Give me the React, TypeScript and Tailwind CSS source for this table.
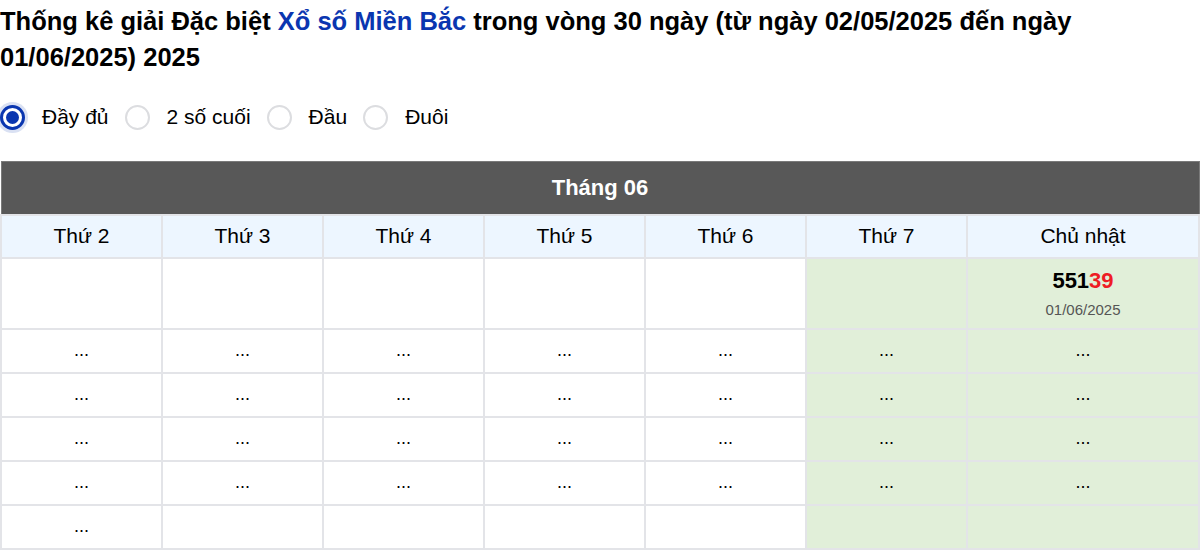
import { useState } from 'react';

const days = ['Thứ 2', 'Thứ 3', 'Thứ 4', 'Thứ 5', 'Thứ 6', 'Thứ 7', 'Chủ nhật'];
const options = ['Đầy đủ', '2 số cuối', 'Đầu', 'Đuôi'];

// rows after the first one: how many cells show "..."
const dotRows = [7, 7, 7, 7, 1];

export default function App() {
  const [mode, setMode] = useState(0);

  return (
    <div className="w-[1200px] bg-white text-black font-['Liberation_Sans',Arial,sans-serif]">
      <h2 className="pt-[3px] text-[25.5px] leading-[36px] font-bold">
        Thống kê giải Đặc biệt <a href="#" className="text-[#0a36b0]">Xổ số Miền Bắc</a> trong vòng 30 ngày (từ ngày 02/05/2025 đến ngày 01/06/2025) 2025
      </h2>

      <div className="mt-[30px] flex items-center h-6 text-[21px]">
        {options.map((o, i) => (
          <label key={o} className="flex items-center cursor-pointer mr-4" onClick={() => setMode(i)}>
            {mode === i ? (
              <span className="w-[25px] h-[25px] rounded-full border-[3px] border-[#0a36b0] bg-white flex items-center justify-center shadow-[0_0_0_3px_rgba(10,54,176,0.15)]">
                <span className="w-[13px] h-[13px] rounded-full bg-[#0a36b0]" />
              </span>
            ) : (
              <span className="w-[25px] h-[25px] rounded-full border-2 border-[#dcdde0] bg-white" />
            )}
            <span className="ml-[17px]">{o}</span>
          </label>
        ))}
      </div>

      <table className="mt-[32px] w-full table-fixed border-collapse text-center">
        <colgroup>
          {days.slice(0, 6).map(d => (
            <col key={d} className="w-[161px]" />
          ))}
          <col />
        </colgroup>
        <thead>
          <tr>
            <th colSpan={7} className="h-[53px] bg-[#585858] text-white text-[22px] font-bold border border-[#7a7a7a]">
              Tháng 06
            </th>
          </tr>
          <tr>
            {days.map(d => (
              <th key={d} className="h-[43px] bg-[#edf6ff] text-[21px] font-normal border-2 border-[#e3e4e8]">
                {d}
              </th>
            ))}
          </tr>
        </thead>
        <tbody className="text-[18px]">
          <tr>
            {days.map((d, i) => (
              <td key={d} className={`h-[71px] border-2 border-[#e3e4e8] align-top ${i >= 5 ? 'bg-[#e1efd9]' : ''}`}>
                {i === 6 && (
                  <div className="pt-[10px]">
                    <div className="text-[22px] font-bold leading-6">
                      551<span className="text-[#ee1c25]">39</span>
                    </div>
                    <div className="mt-[8px] text-[15px] text-[#555] leading-[18px]">01/06/2025</div>
                  </div>
                )}
              </td>
            ))}
          </tr>
          {dotRows.map((n, r) => (
            <tr key={r}>
              {days.map((d, i) => (
                <td key={d} className={`h-[44px] border-2 border-[#e3e4e8] ${i >= 5 ? 'bg-[#e1efd9]' : ''}`}>
                  {i < n ? '...' : ''}
                </td>
              ))}
            </tr>
          ))}
        </tbody>
      </table>
    </div>
  );
}
